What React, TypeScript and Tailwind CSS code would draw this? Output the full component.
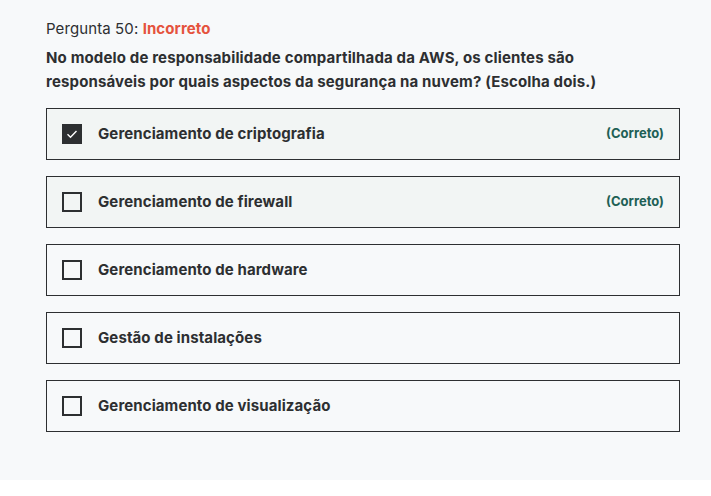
const options = [
    { label: "Gerenciamento de criptografia", checked: true, correct: true },
    { label: "Gerenciamento de firewall", checked: false, correct: true },
    { label: "Gerenciamento de hardware", checked: false, correct: false },
    { label: "Gestão de instalações", checked: false, correct: false },
    { label: "Gerenciamento de visualização", checked: false, correct: false },
]

export default function App() {
    return (
        <div className="h-[480px] w-full bg-[#f7f9fa] text-[#2d2f31]" style={{ fontFamily: "Inter, 'Noto Sans', sans-serif" }}>
            <div className="w-[634px] ml-[46px] pt-[18px]">
                <div className="text-[15px] leading-[22px] tracking-[0.1px]">
                    Pergunta 50: <span className="font-bold text-[#e5533d]">Incorreto</span>
                </div>
                <div className="mt-[6px] max-w-[600px] text-[15px] leading-[24px] font-bold tracking-[0.15px]">
                    No modelo de responsabilidade compartilhada da AWS, os clientes são responsáveis por quais aspectos da segurança na nuvem? (Escolha dois.)
                </div>
                <div className="mt-[14px] flex flex-col gap-4">
                    {options.map((o) => (
                        <div
                            key={o.label}
                            className={"h-[52px] flex items-center border border-[#2d2f31] pl-[15px] pr-[15px] " + (o.correct ? "bg-[#f2f5f4]" : "bg-[#f7f9fa]")}
                        >
                            {o.checked ? (
                                <div className="w-5 h-5 bg-[#2d2f31] flex items-center justify-center">
                                    <svg width="14" height="14" viewBox="0 0 14 14" fill="none">
                                        <path d="M2.5 7.2l3 3L11.5 4" stroke="white" strokeWidth="1.4" />
                                    </svg>
                                </div>
                            ) : (
                                <div className="w-5 h-5 border-2 border-[#2d2f31]" />
                            )}
                            <div className="ml-4 grow text-[15px] font-bold tracking-[0.1px]">{o.label}</div>
                            {o.correct && <div className="text-[13px] font-bold text-[#1e6055]">(Correto)</div>}
                        </div>
                    ))}
                </div>
            </div>
        </div>
    )
}
